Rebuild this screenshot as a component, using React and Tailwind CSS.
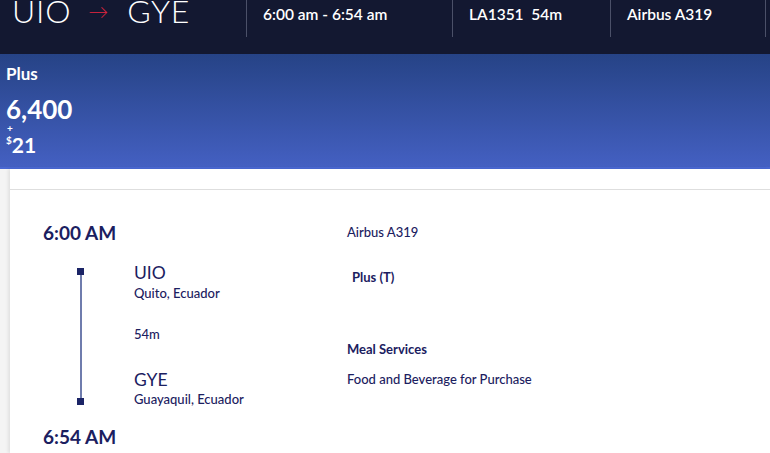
export default function App() {
  const navy = "text-[#1b2060]";
  return (
    <div className="w-[770px] h-[453px] overflow-hidden bg-white font-['Lato','Noto_Sans',sans-serif]">
      {/* Header */}
      <div className="h-[54px] bg-[#131831] flex items-start text-white">
        <div className="w-[247px] h-[37px] border-r border-[#4b5068] flex items-start pl-[12px]">
          <div className="flex items-center mt-[-9px] text-[32px] font-light leading-[40px] tracking-[0.8px]">
            <span>UIO</span>
            <span className="text-[#e8253f] text-[20px] ml-[17px] mr-[18px] font-light">→</span>
            <span>GYE</span>
          </div>
        </div>
        <div className="w-[206px] h-[37px] border-r border-[#4b5068] pl-[16px] pt-[5px] text-[15.5px] font-semibold leading-[18px]">
          6:00 am - 6:54 am
        </div>
        <div className="w-[158px] h-[37px] border-r border-[#4b5068] pl-[16px] pt-[5px] text-[15.5px] font-semibold leading-[18px]">
          LA1351&nbsp; 54m
        </div>
        <div className="w-[155px] h-[37px] border-r border-[#4b5068] pl-[16px] pt-[5px] text-[15.5px] font-semibold leading-[18px]">
          Airbus A319
        </div>
      </div>

      {/* Fare band */}
      <div className="h-[115px] bg-gradient-to-b from-[#264386] to-[#4460c2] border-b-2 border-[#4a68d2] px-[6px] pt-[10px] text-white">
        <div className="text-[17px] font-bold leading-[20px]">Plus</div>
        <div className="mt-[11px] text-[26px] font-bold leading-[28px]">6,400</div>
        <div className="text-[10px] font-bold leading-[9px] pl-[1px] mt-[1px]">+</div>
        <div className="flex items-start leading-[24px]">
          <span className="text-[10px] font-bold leading-[14px]">$</span>
          <span className="text-[21px] font-bold">21</span>
        </div>
      </div>

      {/* Body */}
      <div className="flex h-[284px]">
        <div className="w-[10px] bg-[#f4f4f4] shrink-0"></div>
        <div className="flex-1 shadow-[-2px_0_3px_rgba(0,0,0,0.08)]">
          <div className="h-[21px] border-b border-[#dedede]"></div>
          <div className="flex">
            {/* Left column */}
            <div className="w-[337px] pl-[33px]">
              <div className={`mt-[32px] text-[19px] font-bold leading-[22px] ${navy}`}>6:00 AM</div>
              <div className="flex mt-[19px]">
                <div className="w-[91px] flex flex-col items-start pl-[34px] pt-[5px]">
                  <div className="w-[7px] h-[7px] bg-[#1b2466]"></div>
                  <div className="w-[2px] h-[123px] bg-[#6f7cad] ml-[2.5px]"></div>
                  <div className="w-[7px] h-[7px] bg-[#1b2466]"></div>
                </div>
                <div className={`flex flex-col ${navy}`}>
                  <div className="text-[17.5px] leading-[20px]">UIO</div>
                  <div className="text-[13px] font-medium leading-[18px] mt-[1px]">Quito, Ecuador</div>
                  <div className="text-[13px] font-medium leading-[18px] mt-[23px]">54m</div>
                  <div className="text-[17.5px] leading-[20px] mt-[27px]">GYE</div>
                  <div className="text-[13px] font-medium leading-[18px]">Guayaquil, Ecuador</div>
                </div>
              </div>
              <div className={`mt-[18px] text-[19px] font-bold leading-[22px] ${navy}`}>6:54 AM</div>
            </div>
            {/* Right column */}
            <div className={`flex flex-col ${navy}`}>
              <div className="mt-[33px] text-[13px] font-medium leading-[18px]">Airbus A319</div>
              <div className="mt-[27px] ml-[5px] text-[13px] font-bold leading-[18px]">Plus (T)</div>
              <div className="mt-[54px] text-[13px] font-bold leading-[18px]">Meal Services</div>
              <div className="mt-[12px] text-[13px] font-medium leading-[18px]">Food and Beverage for Purchase</div>
            </div>
          </div>
        </div>
      </div>
    </div>
  );
}
